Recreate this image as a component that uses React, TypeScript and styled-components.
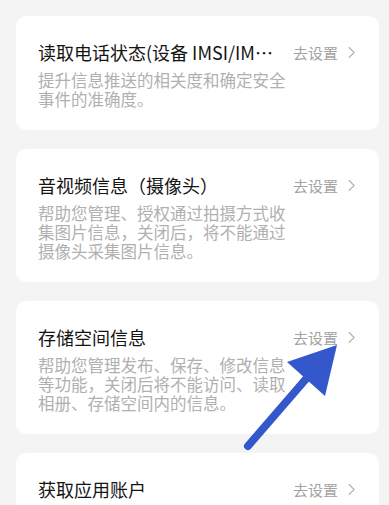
import React from "react";
import styled, { createGlobalStyle } from "styled-components";

const GlobalStyle = createGlobalStyle`
  html, body {
    margin: 0;
    padding: 0;
    background: #f4f4f4;
  }
  body {
    font-family: "Noto Sans CJK SC", "Noto Sans", sans-serif;
  }
`;

interface Item {
  title: string;
  desc: string;
}

const items: Item[] = [
  {
    title: "读取电话状态(设备 IMSI/IMEI 号)",
    desc: "提升信息推送的相关度和确定安全事件的准确度。",
  },
  {
    title: "音视频信息（摄像头）",
    desc: "帮助您管理、授权通过拍摄方式收集图片信息，关闭后，将不能通过摄像头采集图片信息。",
  },
  {
    title: "存储空间信息",
    desc: "帮助您管理发布、保存、修改信息等功能，关闭后将不能访问、读取相册、存储空间内的信息。",
  },
  {
    title: "获取应用账户",
    desc: "",
  },
];

const PermissionCard = ({ title, desc }: Item) => {
  return (
    <Card>
      <TopRow>
        <Title>{title}</Title>
        <Action>
          去设置
          <svg viewBox="0 0 8 14" width={7} height={13} fill="none" className="chevron">
            <path d="M1 1l6 6-6 6" />
          </svg>
        </Action>
      </TopRow>
      {desc && <Desc>{desc}</Desc>}
    </Card>
  );
};

const App = () => {
  return (
    <>
      <GlobalStyle />
      <Page>
        {items.map((item) => (
          <PermissionCard key={item.title} {...item} />
        ))}
        <Arrow viewBox="0 0 389 505" width={389} height={505} aria-hidden="true">
          <line x1="248" y1="446" x2="312" y2="372" stroke="#3458cc" strokeWidth="8" strokeLinecap="round" />
          <polygon points="337,345 287,362 325,396" fill="#3458cc" />
        </Arrow>
      </Page>
    </>
  );
};

export default App;

const Page = styled.div`
  position: relative;
  display: flex;
  flex-direction: column;
  gap: 19px;
  padding: 16px 10px 0 16px;
  height: 505px;
  box-sizing: border-box;
  overflow: hidden;
`;

const Card = styled.div`
  flex-shrink: 0;
  background: #ffffff;
  border-radius: 10px;
  padding: 24px 24px 21px 22px;
  display: flex;
  flex-direction: column;
  gap: 7px;
`;

const TopRow = styled.div`
  display: flex;
  align-items: center;
  gap: 20px;
  height: 24px;
`;

const Title = styled.div`
  flex: 1;
  min-width: 0;
  font-size: 18px;
  line-height: 24px;
  color: #141414;
  white-space: nowrap;
  overflow: hidden;
  text-overflow: ellipsis;
`;

const Action = styled.div`
  display: flex;
  align-items: center;
  gap: 10px;
  font-size: 15px;
  color: #a3a3a3;
  white-space: nowrap;

  .chevron {
    stroke: #b0b0b0;
    stroke-width: 1.3;
  }
`;

const Desc = styled.div`
  width: 252px;
  font-size: 16.5px;
  line-height: 19px;
  color: #b0b0b0;
`;

const Arrow = styled.svg`
  position: absolute;
  left: 0;
  top: 0;
  pointer-events: none;
`;
